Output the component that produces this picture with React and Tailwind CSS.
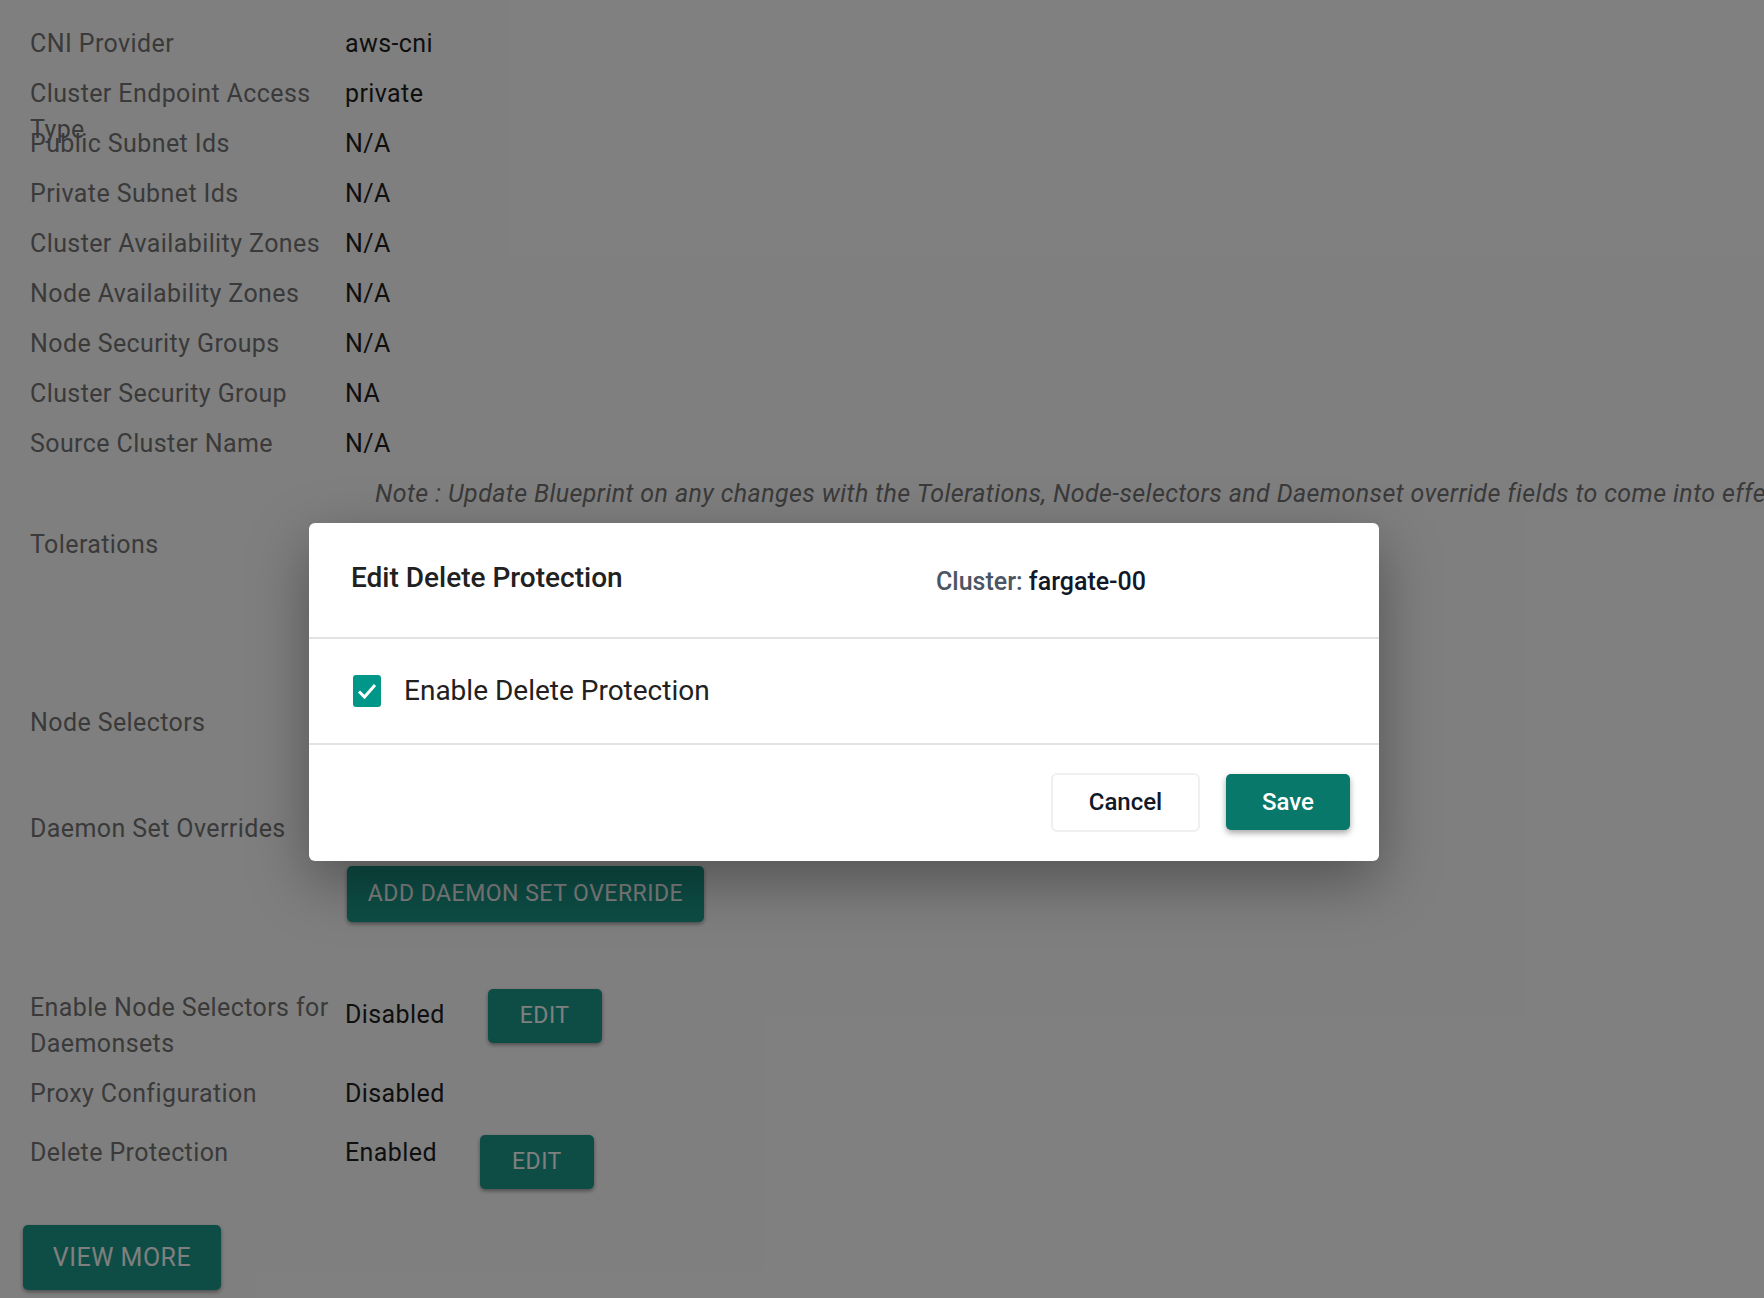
import React from "react";

const rows = [
    ["CNI Provider", "aws-cni"],
    ["Cluster Endpoint Access Type", "private"],
    ["Public Subnet Ids", "N/A"],
    ["Private Subnet Ids", "N/A"],
    ["Cluster Availability Zones", "N/A"],
    ["Node Availability Zones", "N/A"],
    ["Node Security Groups", "N/A"],
    ["Cluster Security Group", "NA"],
    ["Source Cluster Name", "N/A"],
];

const Label = ({ children }) => (
    <div className="w-[345px] shrink-0 pl-[30px] pr-1 text-[#757575]">{children}</div>
);

const TealButton = ({ children, className }) => (
    <button
        className={`bg-[#1a9a8a] text-white rounded-[5px] shadow-[0_2px_4px_rgba(0,0,0,0.4)] tracking-[0.5px] ${className}`}
    >
        {children}
    </button>
);

const App = () => {
    return (
        <div className="relative w-[1764px] h-[1298px] overflow-hidden bg-white font-['Roboto',sans-serif] text-[25px] leading-[36px] tracking-[0.4px] text-[#1e1e1e]">
            <div className="flex flex-col pt-[26px]">
                {rows.map(([label, value]) => (
                    <div key={label} className="flex h-[50px]">
                        <Label>{label}</Label>
                        <div>{value}</div>
                    </div>
                ))}
                <div className="pl-[375px] h-[50px] italic text-[#757575] whitespace-nowrap">
                    Note : Update Blueprint on any changes with the Tolerations, Node-selectors and Daemonset override fields to come into effect
                </div>
                <div className="flex h-[179px] pt-[1px]">
                    <Label>Tolerations</Label>
                </div>
                <div className="flex h-[106px]">
                    <Label>Node Selectors</Label>
                </div>
                <div className="flex h-[179px]">
                    <Label>Daemon Set Overrides</Label>
                    <div className="flex flex-col items-start pl-[2px] pt-[17px]">
                        <div>No Daemon Set Overrides</div>
                        <TealButton className="mt-[2px] w-[357px] h-[56px] text-[23px]">ADD DAEMON SET OVERRIDE</TealButton>
                    </div>
                </div>
                <div className="flex h-[86px]">
                    <Label>Enable Node Selectors for Daemonsets</Label>
                    <div className="pt-[7px]">Disabled</div>
                    <TealButton className="ml-[43px] w-[114px] h-[54px] text-[23px] relative top-[-1px]">EDIT</TealButton>
                </div>
                <div className="flex h-[59px]">
                    <Label>Proxy Configuration</Label>
                    <div>Disabled</div>
                </div>
                <div className="flex h-[90px] pt-[-2px]">
                    <Label>Delete Protection</Label>
                    <div>Enabled</div>
                    <TealButton className="ml-[43px] w-[114px] h-[54px] text-[23px]">EDIT</TealButton>
                </div>
                <TealButton className="ml-[23px] w-[198px] h-[65px] text-[25px]">VIEW MORE</TealButton>
            </div>

            {/* backdrop */}
            <div className="absolute inset-0 bg-black/50" />

            {/* modal */}
            <div className="absolute left-[309px] top-[523px] w-[1070px] h-[338px] bg-white rounded-[6px] shadow-[0_20px_60px_rgba(0,0,0,0.35)] flex flex-col tracking-normal">
                <div className="flex h-[116px] shrink-0 border-b-2 border-[#e2e2e2]">
                    <div className="w-[627px] pl-[42px] pt-[35px] text-[28px] leading-[40px] font-medium text-[#212121]">
                        Edit Delete Protection
                    </div>
                    <div className="pt-[41px] text-[25px] leading-[36px] font-medium text-[#4b5563]">
                        Cluster: <span className="text-[#111827]">fargate-00</span>
                    </div>
                </div>
                <div className="flex items-center h-[106px] shrink-0 border-b-2 border-[#e2e2e2] pl-[44px]">
                    <div className="w-[28px] h-[32px] rounded-[3px] bg-[#009688] flex items-center justify-center">
                        <svg width="22" height="20" viewBox="0 0 22 20" fill="none">
                            <path d="M3 10.5L8.5 16L19 4" stroke="white" strokeWidth="3" />
                        </svg>
                    </div>
                    <span className="ml-[23px] text-[28px] leading-[40px] text-[#212121]">Enable Delete Protection</span>
                </div>
                <div className="flex flex-1 items-center justify-end pr-[29px] pb-[2px]">
                    <button className="w-[149px] h-[59px] border-2 border-[#f0f0f0] rounded-[6px] text-[24px] font-medium text-[#111827]">
                        Cancel
                    </button>
                    <button className="ml-[26px] w-[124px] h-[56px] bg-[#08786b] rounded-[5px] text-[24px] font-medium text-white shadow-[0_3px_6px_rgba(0,0,0,0.35)]">
                        Save
                    </button>
                </div>
            </div>
        </div>
    );
};

export default App;
